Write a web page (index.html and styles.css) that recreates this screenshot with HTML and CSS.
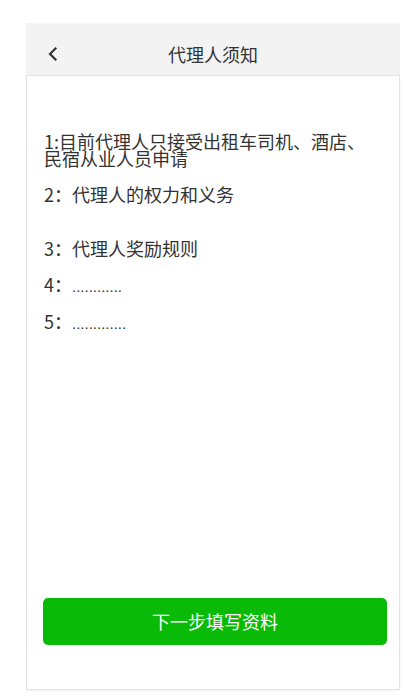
FILE: index.html
```html
<!DOCTYPE html>
<html lang="zh-CN">
<head>
<meta charset="utf-8">
<title>代理人须知</title>
<link rel="stylesheet" href="styles.css">
</head>
<body>
<div class="page">
  <div class="header">
    <div class="back">
      <svg width="10" height="14" viewBox="0 0 10 14"><polyline points="7.5,1.5 2,7 7.5,12.5" fill="none" stroke="#333" stroke-width="2.2" stroke-linecap="square" stroke-linejoin="miter"/></svg>
    </div>
    <div class="title">代理人须知</div>
    <div class="spacer"></div>
  </div>
  <div class="content">
    <div class="list">
      <p class="item item1">1:目前代理人只接受出租车司机、酒店、民宿从业人员申请</p>
      <p class="item item2">2：代理人的权力和义务</p>
      <p class="item item3">3：代理人奖励规则</p>
      <p class="item item4">4：<span class="dots">............</span></p>
      <p class="item item5">5：<span class="dots">.............</span></p>
    </div>
    <button class="next">下一步填写资料</button>
  </div>
</div>
</body>
</html>
```
FILE: styles.css
```css
html, body {
  margin: 0;
  padding: 0;
  background: #fff;
}
body {
  font-family: "Noto Sans CJK SC", "Noto Sans", sans-serif;
  color: #333;
}
.page {
  padding: 23px 6px 6px 26px;
}
.header {
  height: 52px;
  box-sizing: border-box;
  padding-top: 10px;
  background: #f3f3f3;
  display: flex;
  align-items: center;
}
.back {
  width: 60px;
  padding-left: 22px;
  box-sizing: border-box;
  display: flex;
  align-items: center;
  margin-top: -1px;
}
.back svg {
  display: block;
}
.spacer {
  width: 60px;
}
.title {
  flex: 1;
  text-align: center;
  font-size: 18px;
  line-height: 24px;
  color: #333;
}
.content {
  height: 615px;
  box-sizing: border-box;
  border: 1px solid #e4e4e4;
  box-shadow: 0 1px 2px rgba(0, 0, 0, 0.05);
  display: flex;
  flex-direction: column;
  padding: 57px 25px 44px 17px;
}
.list {
  flex: 1;
}
.item {
  margin: 0;
  font-size: 18px;
  line-height: 17px;
  color: #333;
}
.item2 { margin-top: 19px; }
.item3 { margin-top: 37px; }
.item4 { margin-top: 19px; }
.item5 { margin-top: 18px; }
.dots {
  font-family: "Liberation Sans", sans-serif;
  font-size: 15px;
}
.next {
  margin: 0 0 0 -1px;
  width: 344px;
  height: 47px;
  border: none;
  border-radius: 5px;
  background: #09bb07;
  color: #fff;
  font-family: "Noto Sans CJK SC", sans-serif;
  font-size: 18px;
  line-height: 47px;
  padding: 0;
}
```
